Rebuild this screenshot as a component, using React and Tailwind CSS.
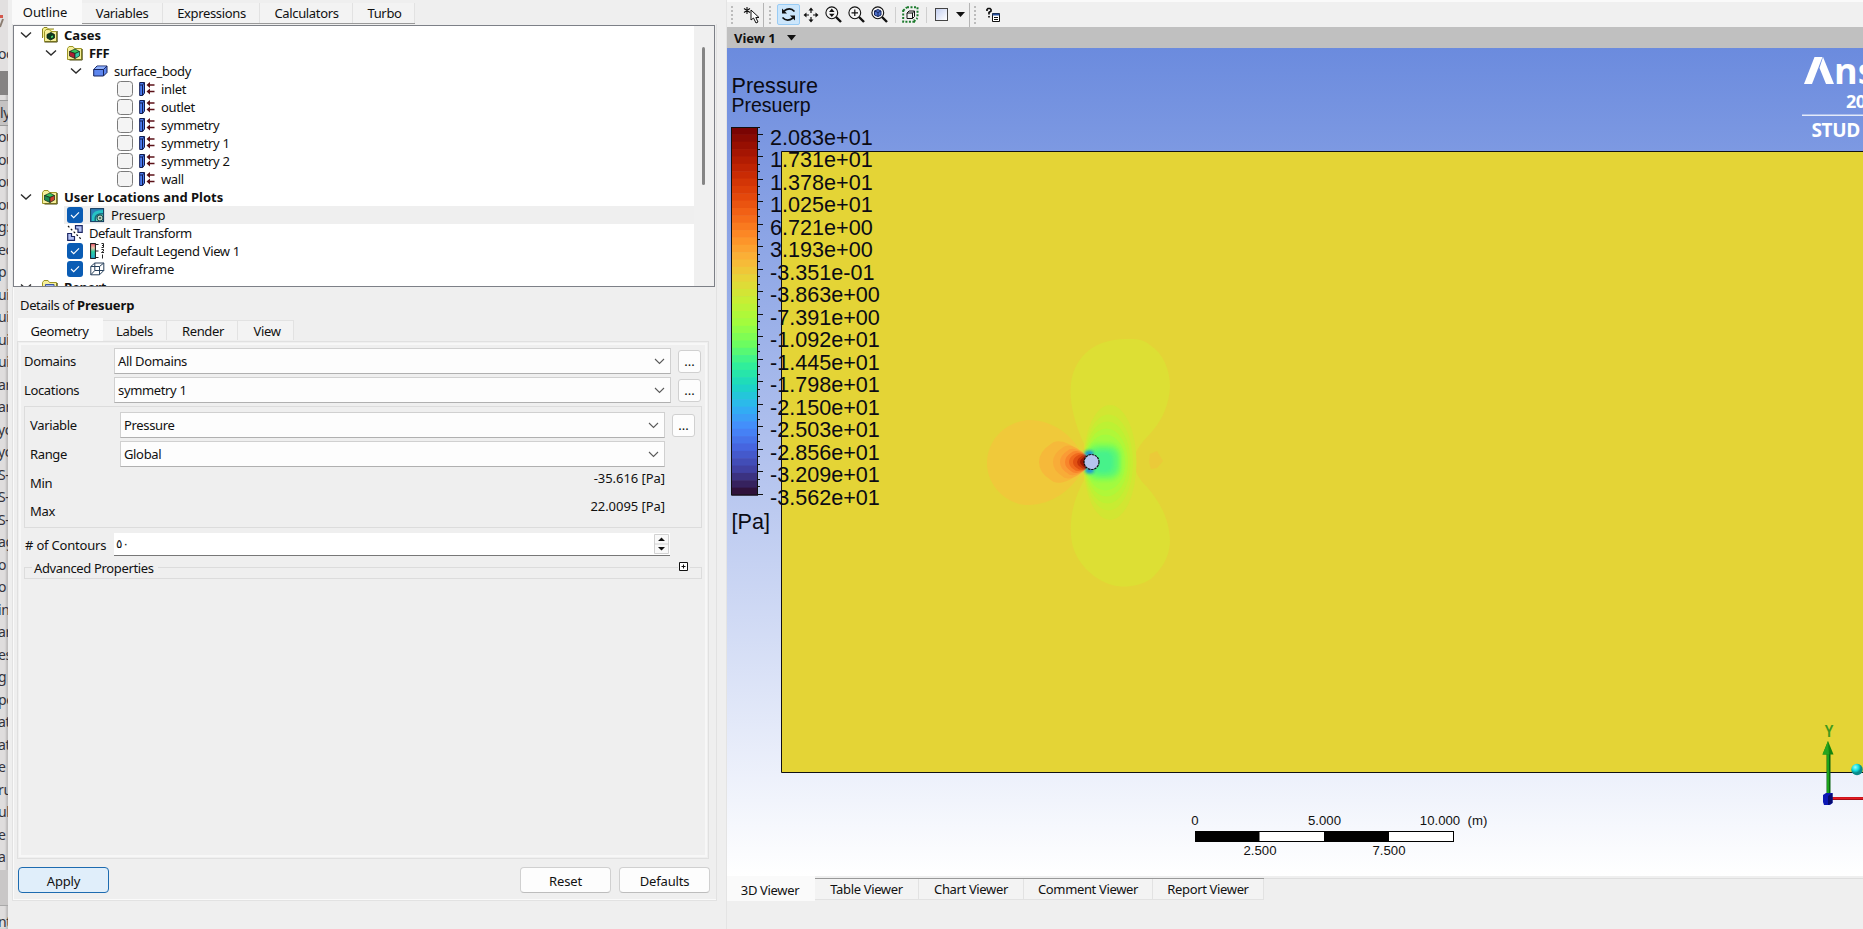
import React from "react";

const STRIP = [
  "ou", "ou", "ou", "ou", "g:", "ec", "p", "ui", "ui", "ui", "ui", "ar", "ar", "yc", "yc", "S-I", "S-I",
  "S-I", "ag", "o", "o", "in", "ar", "es", "g", "pe", "at", "at", "e", "ru", "ub", "e", "a",
];

function Strip() {
  return (
    <div className="flex h-full w-2 shrink-0 flex-col overflow-hidden bg-[#dfdddd] text-[14px] text-[#33333b] shadow-[inset_-2px_0_2px_#bdbbbb]">
      <div className="flex h-[71px] shrink-0 items-end bg-[#e2e0e0] pb-[7px]">
        <svg className="absolute left-0 top-3" width="4" height="18" viewBox="0 0 4 18">
          <path d="M0 3h3v3H0z" fill="#d4574c" />
          <path d="M3 7L0 15" stroke="#8a7c70" strokeWidth="2" />
        </svg>
        <span className="-ml-0.5 leading-5">oc</span>
      </div>
      <div className="h-6 shrink-0 bg-[#858383]" />
      <div className="mt-[5px] h-[26px] shrink-0 border-y border-[#999] bg-[#c4c2c2] leading-6">ly</div>
      <div className="flex h-[744px] shrink-0 flex-col">
        {STRIP.map((t, i) => (
          <span key={i} className="-ml-0.5 h-[22.5px] shrink-0 whitespace-nowrap leading-[22.5px]">{t}</span>
        ))}
      </div>
      <div className="h-9 shrink-0 border-b border-[#a9a9a9] bg-[#c9c7c7]" />
      <div className="-ml-0.5 shrink-0 leading-[32px]">nt</div>
    </div>
  );
}

const Chevron = () => (
  <svg className="shrink-0" width="12" height="18" viewBox="0 0 12 18" fill="none" stroke="#2b2b2b" strokeWidth="1.4">
    <path d="M1 6.5L6 11L11 6.5" />
  </svg>
);

const Folder = ({ kind }) => (
  <svg className="shrink-0" width="16" height="18" viewBox="0 0 16 18">
    {kind === "stack" && <path d="M0.5 12V3L2 1.5H5L6.5 3H12" fill="#f7f28a" stroke="#8a8420" />}
    <path d={kind === "stack" ? "M2.5 15.5V5.5L4 3.5H7.5L9 5.5H14.5V15.5Z" : "M.5 15.5V4.5L2 2.5H6L7.5 4.5H14.5V15.5Z"} fill="#f5ef9b" stroke="#9c9628" />
    <path d="M2.5 16H15.2V5" fill="none" stroke="#4c4a10" />
    {kind === "report" ? (
      <path d="M3.5 6.500H12V14H3.500Z" fill="#9fb6f2" stroke="#3d55a5" />
    ) : kind === "stack" ? (
      <g stroke="#0b2413" strokeWidth=".8">
        <path d="M5 8.500L9 6.500L12.500 8.500V12L8.500 14L5 12Z" fill="#0d3b20" />
        <path d="M8.600 10L11.500 8.700V11.500L8.600 12.800Z" fill="#48d86a" />
      </g>
    ) : (
      <g stroke="#12251a" strokeWidth=".7">
        <path d="M2.500 7.500L8 5L12.500 7.500L8 9.500Z" fill="#37c35c" />
        <path d="M2.500 7.500L8 9.500V14.500L2.500 12Z" fill={kind === "plots" ? "#1c8a54" : "#b01f34"} />
        <path d="M8 9.500L12.500 7.500V12L8 14.500Z" fill={kind === "plots" ? "#d0402c" : "#35c7a4"} />
      </g>
    )}
  </svg>
);

const BodyIcon = () => (
  <svg className="shrink-0" width="15" height="18" viewBox="0 0 15 18" stroke="#16245e">
    <path d="M.7 7.500L4 4H14V10.500L10.500 14H.7Z" fill="#5d86ee" />
    <path d="M.7 7.500H10.500V14M10.500 7.500L14 4" fill="none" />
    <path d="M1.500 7L4.300 4.500H13L10.200 7Z" fill="#8fb0fb" stroke="none" />
  </svg>
);

const BoundaryIcon = () => (
  <svg className="shrink-0" width="16" height="18" viewBox="0 0 16 18">
    <path d="M.7 2.500H5.500V13L3.700 15.500H.7Z" fill="#4d7df0" stroke="#101c50" />
    <path d="M3.500 5V15.500M.7 5H3.500L5.500 2.800" stroke="#101c50" fill="none" />
    <path d="M9 5H15.500M9 11.500H15.500" stroke="#5c1218" strokeWidth="1.500" />
    <path d="M7.500 5L11 2V8ZM7.500 11.500L11 8.500V14.500Z" fill="#5c1218" />
  </svg>
);

const ContourIcon = () => (
  <svg className="shrink-0" width="15" height="18" viewBox="0 0 15 18">
    <rect x=".6" y="2.600" width="13" height="13" fill="#2d7fb6" stroke="#123a5c" />
    <path d="M2 15V10Q3 4 13 4V15Z" fill="#26c2c4" />
    <path d="M4.500 15V12Q5 7 13 7V15Z" fill="#1a6a80" />
    <path d="M6 15V13Q6 8.500 13 8.500V15Z" fill="#57d0b8" />
    <circle cx="10" cy="12" r="3" fill="#b9cfc0" stroke="#24524e" />
    <circle cx="10" cy="12" r="1" fill="#24524e" />
  </svg>
);

const TransformIcon = () => (
  <svg className="shrink-0" width="16" height="18" viewBox="0 0 16 18" fill="#b4c2f4" stroke="#1c2763" strokeWidth="1.200">
    <path d="M8.500 1.600H15.200V8.400H11V5H8.500Z" />
    <path d="M.7 9.500H4.500V12.500H7.500V16.300H.7Z" />
    <path d="M1 2L15 16" stroke="#111" strokeDasharray="2 2" fill="none" />
  </svg>
);

const LegendIcon = () => (
  <svg className="shrink-0" width="16" height="18" viewBox="0 0 16 18">
    <defs>
      <linearGradient id="lg" x2="0" y2="1">
        <stop stopColor="#f65a72" /><stop offset=".3" stopColor="#e9c9ae" /><stop offset=".55" stopColor="#2ccf9d" /><stop offset="1" stopColor="#22a9d8" />
      </linearGradient>
    </defs>
    <rect x=".6" y="1.600" width="4.800" height="14.800" fill="url(#lg)" stroke="#111" />
    <path d="M6 2.500H8.500M6 9H8.500M6 15.500H8.500" stroke="#222" />
    <path d="M11.500 1.500H13.500V5.500H11.500M12 3.500H13.500M11.500 7.500H13.500V9L11.500 10.500H14M12.500 12.500V16.500" stroke="#222" fill="none" />
  </svg>
);

const WireIcon = () => (
  <svg className="shrink-0" width="15" height="18" viewBox="0 0 15 18" fill="none" stroke="#28415c" strokeWidth="1">
    <path d="M.8 6.500H9.500V14.800H.8ZM4.800 3H13.800V10.500H4.800ZM.8 6.500L4.800 3M9.500 6.500L13.800 3M9.500 14.800L13.800 10.500M.8 14.800L4.800 10.500" />
  </svg>
);

const Check = ({ on }) =>
  on ? (
    <span className="flex size-4 shrink-0 items-center justify-center rounded-[3px] bg-[#0a5cb4]">
      <svg width="10" height="8" viewBox="0 0 10 8" fill="none" stroke="#fff" strokeWidth="1.100"><path d="M1 4L3.700 6.700L9 1.300" /></svg>
    </span>
  ) : (
    <span className="size-4 shrink-0 rounded-[3.500px] border border-[#7b7b7b] bg-[#f4f4f4]" />
  );

const Row = ({ className = "", children }) => <div className={`flex h-[18px] shrink-0 items-center ${className}`}>{children}</div>;

function Tree() {
  return (
    <div className="ml-[5px] mt-px flex h-[262px] w-[702px] overflow-hidden border border-[#7d8087] bg-white">
      <div className="flex min-w-0 flex-1 flex-col">
        <Row className="pl-[6px]"><Chevron /><span className="ml-[10px] flex"><Folder kind="stack" /></span><b className="ml-[6px] tracking-normal">Cases</b></Row>
        <Row className="pl-[31px]"><Chevron /><span className="ml-[10px] flex"><Folder kind="case" /></span><b className="ml-[6px]">FFF</b></Row>
        <Row className="pl-[56px]"><Chevron /><span className="ml-[11px] flex"><BodyIcon /></span><span className="ml-[6px]">surface_body</span></Row>
        {["inlet", "outlet", "symmetry", "symmetry 1", "symmetry 2", "wall"].map((t) => (
          <Row key={t} className="pl-[103px]"><Check /><span className="ml-[6px] flex"><BoundaryIcon /></span><span className="ml-[6px]">{t}</span></Row>
        ))}
        <Row className="pl-[6px]"><Chevron /><span className="ml-[10px] flex"><Folder kind="plots" /></span><b className="ml-[6px] tracking-normal">User Locations and Plots</b></Row>
        <Row className="ml-[50px] bg-[#efefef] pl-[3px]"><Check on /><span className="ml-[7px] flex"><ContourIcon /></span><span className="ml-[6px] tracking-[-0.1px]">Presuerp</span></Row>
        <Row className="pl-[53px]"><TransformIcon /><span className="ml-[6px] tracking-[-0.5px]">Default Transform</span></Row>
        <Row className="pl-[53px]"><Check on /><span className="ml-[7px] flex"><LegendIcon /></span><span className="ml-[5px]">Default Legend View 1</span></Row>
        <Row className="pl-[53px]"><Check on /><span className="ml-[7px] flex"><WireIcon /></span><span className="ml-[6px] tracking-[-0.1px]">Wireframe</span></Row>
        <Row className="pl-[6px]"><Chevron /><span className="ml-[10px] flex"><Folder kind="report" /></span><b className="ml-[6px]">Report</b></Row>
      </div>
      <div className="flex w-[20px] justify-center bg-[#f0f0f0] pt-[21px]">
        <div className="-ml-px h-[138px] w-[3px] rounded-full bg-[#858585]" />
      </div>
    </div>
  );
}

const Combo = ({ className, children }) => (
  <div className={`flex h-[26px] items-center justify-between border border-[#d0d0d0] border-b-[#b0b0b0] bg-[#fdfdfd] pl-[3px] pr-[5px] ${className}`}>
    <span>{children}</span>
    <svg width="11" height="7" viewBox="0 0 11 7" fill="none" stroke="#5a5a5a" strokeWidth="1.100"><path d="M1 1L5.500 5.500L10 1" /></svg>
  </div>
);

const Dots = () => (
  <div className="ml-[7px] flex h-[23px] w-[23px] items-center justify-center rounded-[3px] border border-[#d0d0d0] bg-[#fdfdfd] tracking-normal">...</div>
);

const Button = ({ primary, children }) => (
  <div className={`flex h-[26px] w-[91px] items-center justify-center rounded-[4px] border pt-px tracking-[-0.15px] ${primary ? "border-[#1d6bb0] bg-[#e0eefa]" : "border-[#d0d0d0] border-b-[#bdbdbd] bg-[#fdfdfd]"}`}>{children}</div>
);

const Tab = ({ className, children }) => (
  <div className={`flex items-center justify-center border-r border-[#e2e2e2] bg-[#f3f3f3] ${className}`}>{children}</div>
);

function Details() {
  return (
    <div className="flex flex-col">
      <div className="ml-[12px] mt-[9px] h-[18px] leading-[18px]">Details of <b className="tracking-[-0.1px]">Presuerp</b></div>
      <div className="ml-[10px] mt-1 flex h-[23px] items-start">
        <div className="flex h-6 w-[85px] items-center justify-center bg-[#fafafa] pr-0.5 pt-px">Geometry</div>
        <Tab className="mt-0.5 h-5 w-16 border-t">Labels</Tab>
        <Tab className="mt-0.5 h-5 w-[71px] border-t pl-0.5">Render</Tab>
        <Tab className="mt-0.5 h-5 w-14 border-t pl-[3px]">View</Tab>
      </div>
      <div className="ml-[9px] h-[518px] w-[692px] border border-[#e0e0e0] p-px">
        <div className="flex h-full flex-col border-2 border-[#f7f7f7] pl-[3px] pt-[3px]">
          <div className="flex h-[26px] items-center"><span className="w-[90px]">Domains</span><Combo className="w-[557px]">All Domains</Combo><Dots /></div>
          <div className="mt-[3px] flex h-[26px] items-center"><span className="w-[90px]">Locations</span><Combo className="w-[557px]">symmetry 1</Combo><Dots /></div>
          <div className="mt-[3px] flex h-[122px] w-[678px] flex-col border border-[#dcdcdc] pl-[5px] pt-[5px]">
            <div className="flex h-[26px] items-center"><span className="w-[90px]">Variable</span><Combo className="w-[545px]">Pressure</Combo><Dots /></div>
            <div className="mt-[3px] flex h-[26px] items-center"><span className="w-[90px]">Range</span><Combo className="w-[545px]">Global</Combo></div>
            <div className="flex h-[28px] w-[635px] justify-between"><span className="pt-[7px]">Min</span><span className="pt-0.5 tracking-[-0.05px]">-35.616 [Pa]</span></div>
            <div className="flex w-[635px] justify-between"><span className="pt-[7px]">Max</span><span className="pt-0.5 tracking-[-0.05px]">22.0095 [Pa]</span></div>
          </div>
          <div className="mt-[5px] flex h-[23px] items-center">
            <span className="w-[90px] whitespace-nowrap pl-px tracking-[-0.2px]">#&nbsp;of Contours</span>
            <div className="flex h-[23px] w-[556px] items-center justify-between border-b border-[#777] bg-white pl-0.5 pr-px">
              <span className="font-['DejaVu_Sans',sans-serif] text-[12px] tracking-normal">&#x202D;٥٠</span>
              <svg width="15" height="20" viewBox="0 0 15 20" fill="#f9f9f9" stroke="#d2d2d2">
                <path d="M.5 .5H14.500V19.500H.5ZM.5 10H14.500" />
                <path d="M4 7L7.500 3.500L11 7ZM4 13L7.500 16.500L11 13Z" fill="#111" stroke="none" />
              </svg>
            </div>
          </div>
          <div className="mt-[3px] flex h-[20px] w-[678px] flex-col">
            <div className="flex h-[17px] items-center">
              <span className="h-px w-2 bg-[#dcdcdc]" />
              <span className="pl-[2px] pr-1">Advanced Properties</span>
              <span className="h-px flex-1 bg-[#dcdcdc]" />
              <svg className="mx-px mb-0.5" width="9" height="9" viewBox="0 0 9 9" fill="#fff" stroke="#111"><path d="M.5 .5H8.500V8.500H.5ZM2.500 4.500H6.500M4.500 2.500V6.500" /></svg>
              <span className="ml-px h-px w-3 bg-[#dcdcdc]" />
            </div>
            <div className="-mt-2 h-[11px] shrink-0 border-x border-b border-[#dcdcdc]" />
          </div>
        </div>
      </div>
      <div className="ml-[10px] mt-[8px] flex gap-2">
        <Button primary>Apply</Button>
        <div className="ml-[403px] flex gap-2"><Button>Reset</Button><Button>Defaults</Button></div>
      </div>
    </div>
  );
}

const Grip = () => (
  <svg className="shrink-0" width="3" height="20" viewBox="0 0 3 20" fill="#bcbcbc"><path d="M0 1h2v2H0zM0 5h2v2H0zM0 9h2v2H0zM0 13h2v2H0zM0 17h2v2H0z" /></svg>
);

const Lens = ({ children }) => (
  <svg width="17" height="17" viewBox="0 0 17 17" fill="none" stroke="#111">
    <circle cx="6.800" cy="6.800" r="5.900" fill="#f6f6f6" strokeWidth="1.100" />
    <path d="M11 11L16 16" strokeWidth="2.400" />
    {children}
  </svg>
);

function Toolbar() {
  return (
    <div className="flex h-[27px] shrink-0 items-center border-t-2 border-[#fafafa] bg-[#f0f0f0]">
      <span className="ml-[4px] flex"><Grip /></span>
      <svg className="ml-[9px]" width="18" height="18" viewBox="0 0 18 18" fill="none" stroke="#111">
        <path d="M4 1V8M1 2.500L7 6.500M7 2.500L1 6.500" strokeWidth="1.100" />
        <path d="M8 4L8 14L10.500 12L13 17L15 16L12.800 11.500H16Z" fill="#fff" />
      </svg>
      <span className="ml-[2px] h-6 w-px bg-[#b5b5b5]" />
      <span className="ml-[5px] flex"><Grip /></span>
      <span className="ml-[5px] flex h-[21px] w-[23px] items-center justify-center rounded-[2px] border border-[#99ccf5] bg-[#cce6fb]">
        <svg width="15" height="15" viewBox="0 0 15 15" fill="none" stroke="#111" strokeWidth="1.700">
          <path d="M13.500 4.500Q9 -.5 3 4M1.500 10.500Q6 15.500 12 11" />
          <path d="M1 1.500V6.500H6ZM14 13.500V8.500H9Z" fill="#111" stroke="none" />
        </svg>
      </span>
      <svg className="ml-[3px]" width="16" height="16" viewBox="0 0 16 16" stroke="#111">
        <path d="M8 3V6M8 10V13M3 8H6M10 8H13" strokeWidth="1.200" />
        <path d="M8 .5L5.500 3.500H10.500ZM8 15.500L5.500 12.500H10.500ZM.5 8L3.500 5.500V10.500ZM15.500 8L12.500 5.500V10.500Z" fill="#111" stroke="none" />
      </svg>
      <span className="ml-[6px] flex gap-[6px]">
        <Lens><path d="M6.800 2.500L4 6H9.600ZM6.800 11L4 7.800H9.600Z" fill="#111" stroke="none" /></Lens>
        <Lens><path d="M6.800 3.500V10M3.500 6.800H10" strokeWidth="1.200" /></Lens>
        <Lens><path d="M3.500 5L7 3.500L10 5V9L7 10.500L3.500 9Z" fill="#4f73cf" stroke="#17265e" /><path d="M3.500 5L7 6.500L10 5M7 6.500V10.500" stroke="#17265e" /></Lens>
      </span>
      <span className="ml-[7px] h-4 w-px bg-[#cfcfcf]" />
      <svg className="ml-[6px]" width="17" height="17" viewBox="0 0 17 17" fill="none">
        <path d="M5 1.200H15.500V11M1.200 4V15.800H12V13.500M1.200 4.500L5 1.200M12 15.500L15.500 12" stroke="#1b7a2c" strokeWidth="2" strokeDasharray="2 1.500" />
        <path d="M5 7H10.500V12.500H5ZM7 5H12.500V10.500M5 7L7 5M10.500 7L12.500 5M10.500 12.500L12.500 10.500" stroke="#111" />
      </svg>
      <span className="ml-[7px] h-4 w-px bg-[#cfcfcf]" />
      <span className="ml-2 size-[13px] border border-[#444] bg-linear-to-br from-[#c4cff0] to-white" />
      <svg className="ml-2" width="9" height="5" viewBox="0 0 9 5"><path d="M0 0H9L4.500 5Z" fill="#111" /></svg>
      <span className="ml-[4px] h-6 w-px bg-[#b5b5b5]" />
      <span className="ml-[4px] flex"><Grip /></span>
      <svg className="ml-[9px]" width="15" height="16" viewBox="0 0 15 16" fill="none" stroke="#111">
        <path d="M1 4V2.500L2 1.500H4L5 2.500V4L3 5.500V7.500M3 9V10.500" strokeWidth="1.700" />
        <path d="M6.500 6.500H13.500V14.500H6.500Z" fill="#fff" /><path d="M6.500 7.500H13.500" stroke="#27509c" strokeWidth="2" /><path d="M8 10.500H12M8 12.500H12" />
      </svg>
    </div>
  );
}

const VALUES = ["2.083e+01", "1.731e+01", "1.378e+01", "1.025e+01", "6.721e+00", "3.193e+00", "-3.351e-01", "-3.863e+00", "-7.391e+00", "-1.092e+01", "-1.445e+01", "-1.798e+01", "-2.150e+01", "-2.503e+01", "-2.856e+01", "-3.209e+01", "-3.562e+01"];

// Turbo colour stops, high pressure first
const TURBO = [
  [122, 4, 3], [164, 20, 2], [199, 41, 3], [226, 68, 10], [244, 102, 23], [253, 141, 39], [251, 179, 56], [231, 213, 56], [199, 239, 52], [164, 252, 60],
  [112, 254, 92], [50, 241, 151], [26, 215, 194], [46, 180, 242], [70, 138, 252], [70, 98, 220], [64, 64, 160], [48, 18, 59],
];
const BANDS = Array.from({ length: 50 }, (_, i) => {
  const t = (i / 49) * (TURBO.length - 1);
  const k = Math.min(Math.floor(t), TURBO.length - 2);
  return `rgb(${TURBO[k].map((c, j) => Math.round(c + (TURBO[k + 1][j] - c) * (t - k))).join(",")})`;
});

// colour, horizontal radius, vertical radius, centre x
const WAKE = [
  ["#d2e632", 26.500, 57.500, 1110], ["#c8ec32", 24.500, 48, 1108.500], ["#bdf133", 23, 41, 1107.500], ["#b0f738", 21.500, 34, 1106.500], ["#a2fb3f", 20, 28, 1105.500],
  ["#8bfd4c", 18, 20, 1104], ["#70fb62", 16.500, 16.500, 1103.500], ["#58f777", 14, 13.500, 1103.500], ["#46f28a", 10, 10.500, 1103],
];
const STAG = [
  ["#f6b93a", 1039, 21], ["#f8ac38", 1053, 16.500], ["#fa9b36", 1060, 13], ["#f8842b", 1065, 10.500], ["#f06a1e", 1069, 8.500], ["#e04f12", 1073, 7], ["#c53308", 1077, 5.500], ["#9c1503", 1080, 4],
];

function Scene() {
  return (
    <svg className="min-h-0 w-full flex-1 tracking-normal" viewBox="727 48 1136 828" fontFamily="'Liberation Sans', Arial, sans-serif">
      <defs>
        <linearGradient id="sky" x2="0" y2="1"><stop stopColor="#6b8bde" /><stop offset=".5" stopColor="#b3c3ee" /><stop offset="1" stopColor="#ffffff" /></linearGradient>
        <radialGradient id="ball" cx=".35" cy=".3"><stop stopColor="#9ff" /><stop offset=".6" stopColor="#12dede" /><stop offset="1" stopColor="#0a8a8a" /></radialGradient>
        <filter id="soft" x="-.5" y="-.5" width="2" height="2"><feGaussianBlur stdDeviation="1.500" /></filter>
      </defs>
      <rect x="727" y="48" width="1136" height="828" fill="url(#sky)" />
      <path d="M1870 151.500H781.500V772.500H1870" fill="#e4d436" stroke="#111" />
      <path d="M1084 444C1073 420 1069 398 1071 383C1075 355 1096 339 1126 339C1136 339 1143 339 1150 345C1163 353 1170 370 1170 386C1169 410 1158 426 1147 437C1138 447 1134 454 1134 462C1134 470 1138 478 1147 487C1160 502 1170 520 1170 542C1169 560 1160 570 1151 579C1138 587 1124 588 1112 585C1092 579 1076 562 1072 543C1068 520 1074 498 1084 480Z" fill="#dddf34" />
      {WAKE.map(([c, rx, ry, cx], i) => i < 5
        ? <ellipse key={i} cx={cx} cy="462.500" rx={rx} ry={ry} fill={c} />
        : <rect key={i} x={cx - rx} y={462 - ry} width={rx * 2} height={ry * 2} rx={ry * 0.7} fill={c} filter="url(#soft)" />)}
      <path d="M1084 458C1073 434 1051 419 1027 420C1004 423 987 441 987 463C987 487 1008 505 1028 505C1052 505 1074 489 1085 466Z" fill="#f0c93a" />
      {STAG.map(([c, x, r]) => <path key={c} d={`M1086 455Q${x + r} ${462 - r * 1.3} ${x + r * 0.55} ${462 - r * 0.85}Q${x} ${462 - r * 0.5} ${x} 462Q${x} ${462 + r * 0.5} ${x + r * 0.55} ${462 + r * 0.85}Q${x + r} ${462 + r * 1.3} 1086 469Z`} fill={c} />)}
      <path d="M1149 462L1150 454L1157 451L1163 461L1157 468L1151 469Z" fill="#ebca39" />
      <ellipse cx="1089" cy="453.500" rx="4.500" ry="3" fill="#1f93d6" filter="url(#soft)" />
      <ellipse cx="1089.500" cy="470.500" rx="4.500" ry="3" fill="#1f93d6" filter="url(#soft)" />
      <circle cx="1091.500" cy="462" r="7.500" fill="#b5c4ee" stroke="#111" strokeWidth="1.200" strokeDasharray="2.500 .7" />

      {BANDS.map((c, i) => <rect key={i} x="732" y={127 + i * 7.36} width="26" height="7.900" fill={c} />)}
      <rect x="731.500" y="127.500" width="26" height="367.500" fill="none" stroke="#111" />
      <path stroke="#111" d={Array.from({ length: 49 }, (_, i) => `M758 ${Math.round(134.5 + i * 7.51) - 0.5}h${i % 3 === 0 ? 5 : 2}`).join("") + "M758 127.500h2"} />
      <g fill="#0b0b14" fontSize="21.600">
        <text x="731.500" y="92.500">Pressure</text>
        <text x="731.500" y="111.500" fontSize="19.500">Presuerp</text>
        {VALUES.map((v, i) => <text key={v} x="770" y={144.5 + i * 22.5}>{v}</text>)}
        <text x="731.500" y="529">[Pa]</text>
      </g>

      <g fill="#fff" fontFamily="'Open Sans', sans-serif" fontWeight="700">
        <path d="M1804 84L1814.500 57H1822.500L1812 84Z" />
        <path d="M1823 57L1834 84H1826L1819.500 68Z" />
        <text x="1834" y="84" fontSize="36">ns</text>
        <text x="1846" y="108" fontSize="18" letterSpacing="-.6">20</text>
        <path d="M1802 114.500H1863V116H1802Z" opacity=".8" />
        <text x="1811.500" y="136.500" fontSize="19" letterSpacing="-.4">STUD</text>
      </g>

      <g>
        <path d="M1830 798.500H1863" stroke="#8c0b12" strokeWidth="3" />
        <path d="M1830 798.200H1863" stroke="#e61a22" strokeWidth="2" />
        <path d="M1828.500 795V750" stroke="#0c6410" strokeWidth="4" />
        <path d="M1828 795V750" stroke="#1ca31c" strokeWidth="2" />
        <path d="M1828 741L1833.500 754.500H1822.500Z" fill="#14850f" />
        <path d="M1828 741L1829 754.500H1822.500Z" fill="#28a51f" />
        <path d="M1823 795L1826 793H1832.500V803L1830 805H1824L1823 802Z" fill="#0d18b5" />
        <path d="M1828 796L1832.500 793V803L1828 805Z" fill="#060a70" />
        <circle cx="1857" cy="769.500" r="5.700" fill="url(#ball)" />
        <text x="1824.500" y="736.500" fontSize="16" fontWeight="700" fill="#3f9a1c" textLength="9" lengthAdjust="spacingAndGlyphs">Y</text>
      </g>

      <rect x="1195.500" y="831.500" width="258" height="10" fill="#fff" stroke="#000" />
      <path d="M1195 831H1259.500V842H1195ZM1324 831H1389V842H1324Z" />
      <g fontSize="13.200" fill="#111" textAnchor="middle">
        <text x="1195" y="825">0</text><text x="1324.500" y="825">5.000</text><text x="1440" y="825">10.000</text><text x="1477.500" y="825">(m)</text>
        <text x="1260" y="855">2.500</text><text x="1389" y="855">7.500</text>
      </g>
    </svg>
  );
}

export default function App() {
  return (
    <div className="relative flex h-[929px] w-[1863px] overflow-hidden bg-[#efefef] font-['Noto_Sans',sans-serif] text-[13px] leading-[18px] tracking-[-0.35px] text-[#111]">
      <Strip />
      <div className="flex w-[718px] shrink-0 flex-col">
        <div className="ml-1 flex h-6 items-start">
          <div className="flex h-full w-[70px] items-center justify-center bg-[#fafafa] pr-1.5 tracking-[-0.1px]">
            <span className="pl-0.5">Outline</span>
          </div>
          <div className="flex h-6 items-stretch border-b border-[#999] pt-[3px]">
            <Tab className="w-[81px]">Variables</Tab>
            <Tab className="w-[97px] pl-px">Expressions</Tab>
            <Tab className="w-[93px] pl-px">Calculators</Tab>
            <Tab className="w-[62px] pl-0.5">Turbo</Tab>
          </div>
        </div>
        <div className="ml-1 h-[877px] w-[705px] border border-t-0 border-[#e2e2e2] shadow-[inset_1px_-1px_0_#fafafa]">
          <div className="-ml-[5px]">
            <Tree />
            <Details />
          </div>
        </div>
      </div>
      <div className="flex min-w-0 flex-1 flex-col border-l border-[#e4e4e4]">
        <Toolbar />
        <div className="flex h-[21px] shrink-0 items-center bg-[#c0c0c0] pl-[7px] tracking-normal">
          <b>View 1</b>
          <svg className="ml-[11px]" width="9" height="6" viewBox="0 0 9 6"><path d="M0 0H9L4.500 5.500Z" fill="#111" /></svg>
        </div>
        <Scene />
        <div className="flex h-[53px] shrink-0 items-start">
          <div className="flex h-[25px] w-[88px] items-center justify-center bg-[#fafafa] pr-0.5 pt-0.5">3D Viewer</div>
          <div className="mt-0.5 flex h-[22px] border-b border-t border-b-[#e2e2e2] border-t-[#999]">
            <Tab className="w-[104px]">Table Viewer</Tab>
            <Tab className="w-[105px]">Chart Viewer</Tab>
            <Tab className="w-[129px]">Comment Viewer</Tab>
            <Tab className="w-[111px]">Report Viewer</Tab>
          </div>
          <div className="mt-0.5 h-px flex-1 bg-[#dedede]" />
        </div>
      </div>
    </div>
  );
}
